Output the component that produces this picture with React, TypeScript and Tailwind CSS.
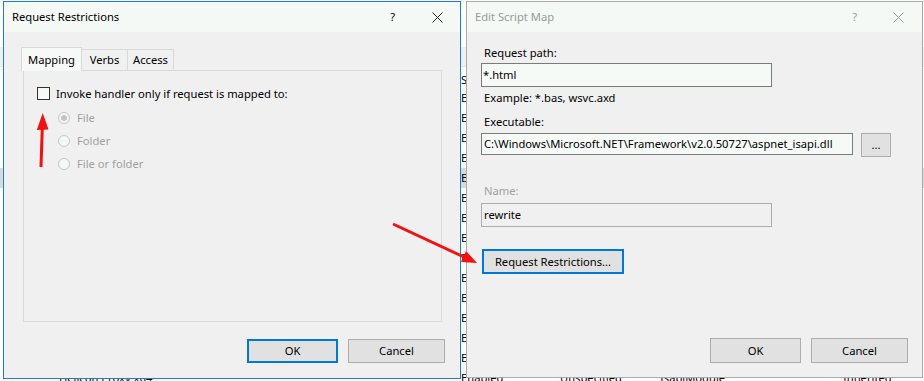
const rows = ["E", "E", "E", "E", "E", "E", "E", "E", "E", "E", "E", "E", "E", "E"];

function CloseIcon({ color }: { color: string }) {
  return (
    <svg width="11" height="11" viewBox="0 0 11 11">
      <path d="M0.5 0.5 L10.5 10.5 M10.5 0.5 L0.5 10.5" stroke={color} strokeWidth="1" />
    </svg>
  );
}

function Radio({ label, checked }: { label: string; checked?: boolean }) {
  return (
    <div className="flex items-center h-[12px]">
      <span className="w-[12px] h-[12px] rounded-full border border-[#c4c4c4] bg-[#f4f9f6] flex items-center justify-center">
        {checked && <span className="w-[6px] h-[6px] rounded-full bg-[#c4c4c4]" />}
      </span>
      <span className="ml-[7px] text-[#a0a0a0]">{label}</span>
    </div>
  );
}

function RequestRestrictions() {
  return (
    <div className="absolute left-[3px] top-[1px] w-[458px] h-[378px] border border-[#1a7fd4] bg-[#f0f0f0] flex flex-col">
      <div className="h-[30px] shrink-0 bg-[#f4f9f6] flex items-center pl-[8px]">
        <span>Request Restrictions</span>
        <span className="ml-auto mr-[37px]">?</span>
        <span className="mr-[17px] flex">
          <CloseIcon color="#222" />
        </span>
      </div>

      <div className="flex pl-[17px] pt-[15px] h-[38px]">
        <div className="relative z-10 h-[24px] w-[61px] border border-b-0 border-[#d9d9d9] bg-[#f6f9f7] flex items-center justify-center">
          Mapping
        </div>
        <div className="self-end h-[21px] w-[46px] border-t border-r border-[#d9d9d9] flex items-center justify-center">
          Verbs
        </div>
        <div className="self-end h-[21px] w-[46px] border-t border-r border-[#d9d9d9] flex items-center justify-center">
          Access
        </div>
      </div>

      <div className="ml-[19px] w-[419px] h-[252px] border border-[#d9d9d9] bg-[#f0f0f0] flex flex-col pl-[13px] pt-[16px]">
        <div className="flex items-center h-[13px]">
          <span className="w-[13px] h-[13px] border border-[#333] bg-[#f4f9f6]" />
          <span className="ml-[6px]">Invoke handler only if request is mapped to:</span>
        </div>
        <div className="flex flex-col gap-[11px] mt-[12px] pl-[21px]">
          <Radio label="File" checked />
          <Radio label="Folder" />
          <Radio label="File or folder" />
        </div>
      </div>

      <div className="flex justify-end gap-[10px] pr-[15px] mt-[17px]">
        <button className="w-[91px] h-[24px] border-2 border-[#0078d7] bg-[#e1e1e1]">OK</button>
        <button className="w-[97px] h-[24px] border border-[#adadad] bg-[#e1e1e1]">Cancel</button>
      </div>
    </div>
  );
}

function EditScriptMap() {
  return (
    <div className="absolute left-[466px] top-[1px] w-[457px] h-[377px] border border-[#aaaaaa] bg-[#f0f0f0] flex flex-col">
      <div className="h-[30px] shrink-0 bg-[#f4f9f6] flex items-center pl-[8px] text-[#999]">
        <span>Edit Script Map</span>
        <span className="ml-auto mr-[36px]">?</span>
        <span className="mr-[18px] flex">
          <CloseIcon color="#999" />
        </span>
      </div>

      <div className="flex flex-col pl-[14px] pt-[13px]">
        <span className="ml-[3px]">Request path:</span>
        <div className="mt-[2px] w-[291px] h-[24px] border border-[#7a7a7a] bg-[#f6faf7] flex items-center pl-[1px]">
          *.html
        </div>
        <span className="ml-[3px] mt-[3px]">Example: *.bas, wsvc.axd</span>
        <span className="ml-[3px] mt-[8px]">Executable:</span>
        <div className="mt-[3px] flex items-start">
          <div className="w-[372px] h-[22px] border border-[#7a7a7a] bg-[#f6faf7] flex items-center pl-[2px] whitespace-nowrap overflow-hidden">
            C:\Windows\Microsoft.NET\Framework\v2.0.50727\aspnet_isapi.dll
          </div>
          <button className="ml-[8px] w-[30px] h-[24px] border border-[#adadad] bg-[#e1e1e1] leading-[16px]">...</button>
        </div>
        <span className="ml-[3px] mt-[26px] text-[#a0a0a0]">Name:</span>
        <div className="mt-[4px] w-[291px] h-[24px] border border-[#adadad] bg-[#f0f0f0] flex items-center pl-[2px]">
          rewrite
        </div>
        <button className="ml-[1px] mt-[22px] w-[142px] h-[25px] border-2 border-[#0078d7] bg-[#e1e1e1]">
          Request Restrictions...
        </button>
      </div>

      <div className="flex justify-end gap-[10px] pr-[14px] mt-[64px]">
        <button className="w-[91px] h-[25px] border border-[#adadad] bg-[#e1e1e1]">OK</button>
        <button className="w-[97px] h-[25px] border border-[#adadad] bg-[#e1e1e1]">Cancel</button>
      </div>
    </div>
  );
}

export default function App() {
  return (
    <div className="relative w-[924px] h-[381px] overflow-hidden bg-white text-[11.2px] leading-[16px] text-black font-['Noto_Sans',sans-serif]">
      {/* handler mappings list behind the dialogs: only a narrow strip shows */}
      <div className="h-[47px]" />
      <div className="h-[20px] bg-[#f0f0f0] border-b border-[#e3e3e3]" />
      <div className="h-[21px] flex items-end">
        <span className="ml-[461px]">S</span>
      </div>
      {rows.map((r, i) => (
        <div key={i} className={"h-[20px] flex items-center " + (i === 4 ? "bg-[#d9d9d9]" : "")}>
          <span className="ml-[461px]">{r}</span>
        </div>
      ))}
      <div className="h-[20px] flex items-center whitespace-nowrap">
        <span className="pl-[59px] w-[336px]">Helicon Proxy x64</span>
        <span className="w-[125px]">*</span>
        <span className="w-[99px]">Enabled</span>
        <span className="w-[100px]">Unspecified</span>
        <span className="w-[183px]">IsapiModule</span>
        <span>Inherited</span>
      </div>

      <RequestRestrictions />
      <EditScriptMap />

      <svg className="absolute inset-0 pointer-events-none" width="924" height="381" viewBox="0 0 924 381">
        <line x1="41" y1="167" x2="42.3" y2="127" stroke="#f21010" strokeWidth="3" />
        <polygon points="42.7,113 36.8,130 48.5,129.5" fill="#f21010" />
        <line x1="393" y1="224" x2="464" y2="257" stroke="#f21010" strokeWidth="3" />
        <polygon points="477,263 461,262 466,251" fill="#f21010" />
      </svg>
    </div>
  );
}
